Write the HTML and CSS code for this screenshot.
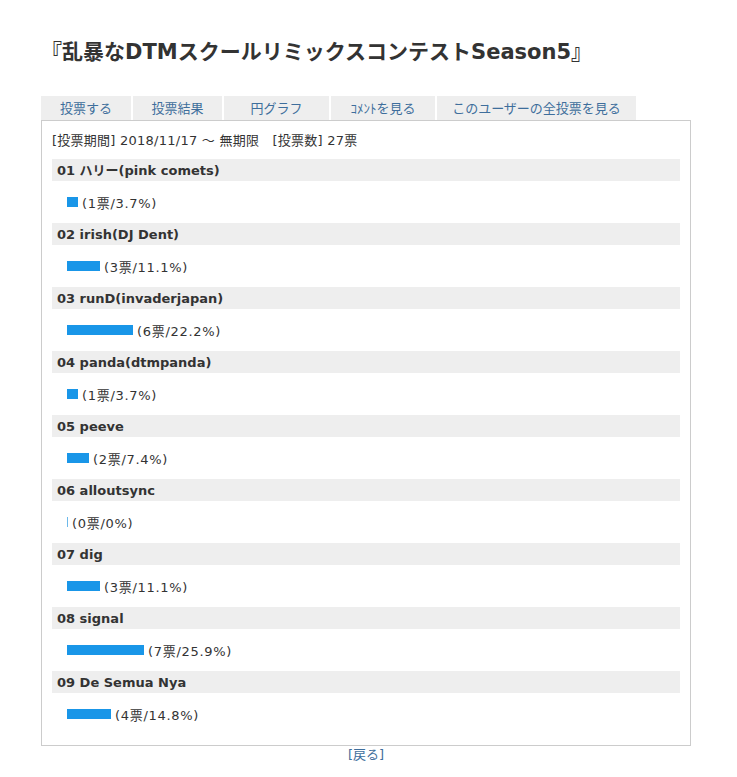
FILE: index.html
```html
<!DOCTYPE html>
<html lang="ja">
<head>
<meta charset="utf-8">
<title>乱暴なDTMスクールリミックスコンテストSeason5</title>
<link rel="stylesheet" href="styles.css">
</head>
<body>
<div class="page">
  <h1 class="title">『乱暴なDTMスクールリミックスコンテストSeason5』</h1>
  <ul class="tabs">
    <li class="tab t1"><a href="#">投票する</a></li>
    <li class="tab t2"><a href="#">投票結果</a></li>
    <li class="tab t3"><a href="#">円グラフ</a></li>
    <li class="tab t4"><a href="#">ｺﾒﾝﾄを見る</a></li>
    <li class="tab t5"><a href="#">このユーザーの全投票を見る</a></li>
  </ul>
  <div class="box">
    <p class="period">[投票期間] 2018/11/17 ～ 無期限　[投票数] 27票</p>
    <div class="item">
      <h2 class="item-name">01 ハリー(pink comets)</h2>
      <div class="item-bar"><span class="bar" style="width:11px"></span><span class="count">(1票/3.7%)</span></div>
    </div>
    <div class="item">
      <h2 class="item-name">02 irish(DJ Dent)</h2>
      <div class="item-bar"><span class="bar" style="width:33px"></span><span class="count">(3票/11.1%)</span></div>
    </div>
    <div class="item">
      <h2 class="item-name">03 runD(invaderjapan)</h2>
      <div class="item-bar"><span class="bar" style="width:66px"></span><span class="count">(6票/22.2%)</span></div>
    </div>
    <div class="item">
      <h2 class="item-name">04 panda(dtmpanda)</h2>
      <div class="item-bar"><span class="bar" style="width:11px"></span><span class="count">(1票/3.7%)</span></div>
    </div>
    <div class="item">
      <h2 class="item-name">05 peeve</h2>
      <div class="item-bar"><span class="bar" style="width:22px"></span><span class="count">(2票/7.4%)</span></div>
    </div>
    <div class="item">
      <h2 class="item-name">06 alloutsync</h2>
      <div class="item-bar"><span class="bar bar-zero" style="width:1px"></span><span class="count">(0票/0%)</span></div>
    </div>
    <div class="item">
      <h2 class="item-name">07 dig</h2>
      <div class="item-bar"><span class="bar" style="width:33px"></span><span class="count">(3票/11.1%)</span></div>
    </div>
    <div class="item">
      <h2 class="item-name">08 signal</h2>
      <div class="item-bar"><span class="bar" style="width:77px"></span><span class="count">(7票/25.9%)</span></div>
    </div>
    <div class="item">
      <h2 class="item-name">09 De Semua Nya</h2>
      <div class="item-bar"><span class="bar" style="width:44px"></span><span class="count">(4票/14.8%)</span></div>
    </div>
  </div>
  <p class="back"><a href="#">[戻る]</a></p>
</div>
</body>
</html>
```

FILE: styles.css
```css
* { box-sizing: border-box; }
html, body { margin: 0; padding: 0; background: #fff; }
body {
  font-family: "DejaVu Sans", "Noto Sans CJK JP", sans-serif;
  font-size: 13px;
  color: #333;
}
a { color: #3e6e9c; text-decoration: none; }
.page {
  width: 650px;
  margin-left: 41px;
}
.title {
  margin: 0;
  padding-top: 38px;
  height: 96px;
  line-height: 28px;
  font-size: 21px;
  font-weight: bold;
  color: #333;
  padding-left: 0;
}
.tabs {
  list-style: none;
  margin: 0;
  padding: 0;
  display: flex;
  gap: 2px;
  height: 24px;
}
.tab {
  background: #eeeeee;
  height: 24px;
  line-height: 26px;
  text-align: center;
}
.tab a { display: block; }
.t1 { width: 90px; }
.t2 { width: 89px; }
.t3 { width: 105px; }
.t4 { width: 104px; }
.t5 { width: 199px; }
.box {
  border: 1px solid #cccccc;
  padding: 11px 10px 10px 10px;
}
.period {
  margin: 0 0 9px;
  height: 18px;
  line-height: 18px;
  letter-spacing: 0.25px;
}
.item-name {
  margin: 0;
  background: #eeeeee;
  height: 22px;
  line-height: 23px;
  padding-left: 5px;
  font-size: 13px;
  font-weight: bold;
}
.item-bar {
  height: 42px;
  display: flex;
  align-items: center;
  padding-left: 15px;
  gap: 4px;
}
.count {
  letter-spacing: 0.7px;
}
.bar {
  display: block;
  height: 10px;
  background: #1996e8;
}
.bar-zero { background: #6db9ea; }
.back {
  margin: 0;
  text-align: center;
  line-height: 18px;
  height: 18px;
}
```
